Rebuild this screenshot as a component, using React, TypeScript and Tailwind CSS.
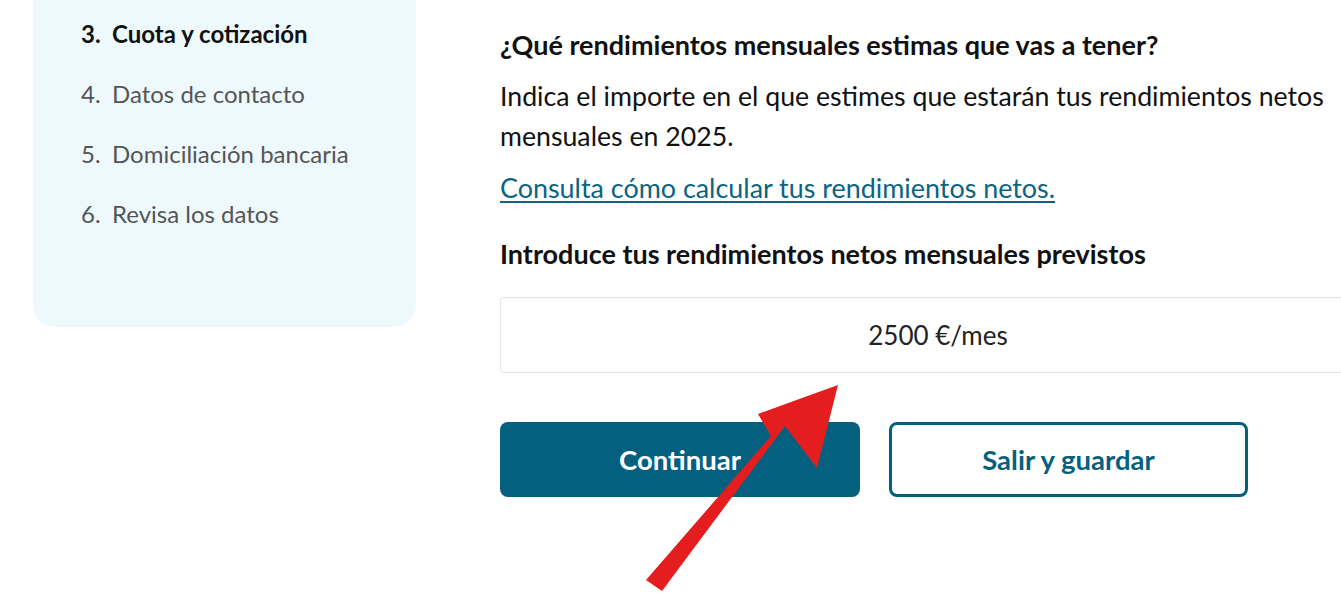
import React from "react";

export default function App() {
  const steps = [
    { n: "3.", t: "Cuota y cotización", active: true },
    { n: "4.", t: "Datos de contacto" },
    { n: "5.", t: "Domiciliación bancaria" },
    { n: "6.", t: "Revisa los datos" },
  ];
  return (
    <div
      className="relative w-[1341px] h-[593px] overflow-hidden bg-white"
      style={{ fontFamily: "Lato, 'Noto Sans', sans-serif" }}
    >
      <div className="flex items-start">
        <aside className="ml-[33px] w-[383px] shrink-0 bg-[#eef9fe] rounded-b-[22px] pt-[4px] pb-[83px] pl-[48px]">
          <ul>
            {steps.map((s) => (
              <li
                key={s.n}
                className={`h-[60px] flex items-center text-[24px] ${
                  s.active ? "font-bold text-[#111]" : "text-[#555]"
                }`}
              >
                <span className="w-[31px]">{s.n}</span>
                <span>{s.t}</span>
              </li>
            ))}
          </ul>
        </aside>
        <main className="ml-[84px] w-[876px] shrink-0 pt-[30px] text-[#111]">
          <h2 className="text-[27px] leading-[30px] font-bold">
            ¿Qué rendimientos mensuales estimas que vas a tener?
          </h2>
          <p className="mt-[16px] text-[26.7px] leading-[40px] w-[840px]">
            Indica el importe en el que estimes que estarán tus rendimientos netos mensuales en 2025.
          </p>
          <a
            href="#"
            className="block mt-[12px] text-[26.9px] leading-[40px] text-[#0b6482] underline underline-offset-[3px] decoration-[2px]"
          >
            Consulta cómo calcular tus rendimientos netos.
          </a>
          <p className="mt-[26px] text-[27px] leading-[40px] font-bold">
            Introduce tus rendimientos netos mensuales previstos
          </p>
          <div className="mt-[23px] h-[76px] border border-[#dde6ea] rounded-[4px] flex items-center justify-center text-[26px] text-[#222]">
            2500 €/mes
          </div>
          <div className="mt-[49px] flex gap-[29px]">
            <button className="w-[360px] h-[75px] rounded-[8px] bg-[#05607f] text-white text-[27.5px] font-bold">
              Continuar
            </button>
            <button className="w-[359px] h-[75px] rounded-[8px] border-[3px] border-[#05607f] text-[#05607f] text-[27.5px] font-bold bg-white">
              Salir y guardar
            </button>
          </div>
        </main>
      </div>
      <svg
        className="absolute left-0 top-0 pointer-events-none"
        width="1341"
        height="593"
        viewBox="0 0 1341 593"
      >
        <polygon
          points="646,580 662,591 785,426 817,468 838,385 758,414 771,436"
          fill="#e41e1e"
        />
      </svg>
    </div>
  );
}
